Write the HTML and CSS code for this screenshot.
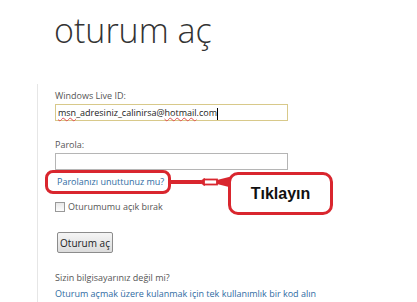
FILE: index.html
```html
<!DOCTYPE html>
<html lang="tr">

<head>
    <meta charset="UTF-8">
    <meta name="viewport" content="width=device-width, initial-scale=1.0">
    <title>Oturum aç</title>
    <link rel="stylesheet" href="styles.css">
</head>

<body>

    <h1 class="title">oturum aç</h1>

    <div class="panel">
        <div class="field-label">Windows Live ID:</div>
        <div class="field field-active">
            <span class="typo">msn</span>_adresiniz_calinirsa@<span class="typo">hotmail</span>.com<span class="caret"></span>
        </div>

        <div class="field-label label-gap">Parola:</div>
        <div class="field"></div>

        <!-- link + not -->
        <div class="forgot-row">
            <a href="#" class="forgot">Parolanızı unuttunuz mu?</a>
            <svg class="arrow" width="62" height="12" viewBox="0 0 62 12">
                <rect x="0" y="4" width="30" height="4" fill="#d9262e" />
                <polygon points="27,6 34,2 34,10" fill="#d9262e" />
                <rect x="33" y="3.5" width="13" height="5" fill="#fff" stroke="#d9262e" stroke-width="1.8" />
                <polygon points="46,4 62,0 62,12 46,8" fill="#d9262e" />
            </svg>
            <div class="callout">Tıklayın</div>
        </div>

        <label class="remember"><span class="check"></span>Oturumumu açık bırak</label>

        <button class="submit">Oturum aç</button>

        <div class="note">Sizin bilgisayarınız değil mi?</div>
        <a href="#" class="link">Oturum açmak üzere kulanmak için tek kullanımlık bir kod alın</a>
    </div>

</body>

</html>
```

FILE: styles.css
```css
* {
    box-sizing: border-box;
}

body {
    font-family: "Open Sans", Arial, sans-serif;
    background-color: white;
    color: #444;
    margin: 0;
    width: 417px;
    height: 302px;
    overflow: hidden;
}

.title {
    margin: 0;
    padding: 5px 0 0 54px;
    height: 84px;
    font-size: 34px;
    font-weight: 300;
    color: #333;
    line-height: 50px;
}

.panel {
    margin-left: 37px;
    border-left: 1px solid #e6e6e6;
    padding-left: 17px;
    padding-top: 5px;
    font-size: 9px;
}

.field-label {
    line-height: 14px;
    height: 15px;
    color: #555;
}

.label-gap {
    margin-top: 17px;
}

.field {
    width: 233px;
    height: 17px;
    border: 1px solid #b5b5b5;
    line-height: 15px;
    padding-left: 2px;
    color: #222;
    font-size: 9px;
}

.field-active {
    border-color: #d8c98a;
}

.typo {
    text-decoration: underline wavy #e05050;
    text-decoration-thickness: 1px;
}

.caret {
    display: inline-block;
    width: 1px;
    height: 12px;
    background: #000;
    vertical-align: middle;
}

.forgot-row {
    position: relative;
    height: 24px;
    display: flex;
    align-items: center;
}

.forgot {
    margin-left: -10px;
    padding: 3px 4px 3px 9px;
    border: 3px solid #d9262e;
    border-radius: 8px;
    color: #2f6ca3;
    text-decoration: none;
    line-height: 12px;
}

.arrow {
    display: block;
}

.callout {
    position: absolute;
    left: 173px;
    top: 2px;
    width: 105px;
    height: 43px;
    border: 3px solid #d9262e;
    border-radius: 10px;
    background: white;
    display: flex;
    align-items: center;
    justify-content: center;
    font-family: "Liberation Sans", Arial, sans-serif;
    font-weight: bold;
    font-size: 16px;
    color: #111;
}

.remember {
    display: flex;
    align-items: center;
    margin-top: 6px;
    height: 13px;
    color: #555;
}

.check {
    width: 10px;
    height: 10px;
    border: 1px solid #999;
    background: linear-gradient(#e8e8e8, #fdfdfd);
    margin-right: 3px;
}

.submit {
    display: block;
    margin: 19px 0 0 2px;
    width: 56px;
    height: 21px;
    padding: 0;
    border: 1px solid #8c8c8c;
    border-radius: 2px;
    background: linear-gradient(#f5f5f5, #dcdcdc);
    font-family: "Open Sans", Arial, sans-serif;
    font-size: 10px;
    color: #222;
}

.note {
    margin-top: 17px;
    line-height: 16px;
    color: #555;
}

.link {
    display: block;
    color: #2f6ca3;
    text-decoration: none;
    line-height: 16px;
}
```
